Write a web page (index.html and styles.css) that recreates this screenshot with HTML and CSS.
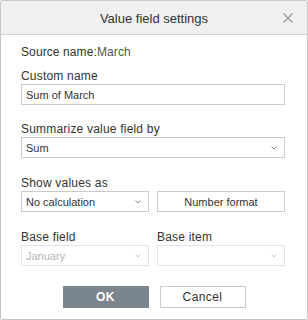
FILE: index.html
```html
<!DOCTYPE html>
<html lang="en">
<head>
  <meta charset="UTF-8">
  <title>Value field settings</title>
  <link rel="stylesheet" href="styles.css">
</head>
<body>
  <div class="dialog">
    <div class="header">
      <span class="title">Value field settings</span>
      <svg class="close" width="10" height="10" viewBox="0 0 10 10">
        <path d="M0.5 0.5 L9.5 9.5 M9.5 0.5 L0.5 9.5" stroke="#9a9a9a" stroke-width="1.2" fill="none"/>
      </svg>
    </div>

    <div class="content">
      <p class="source">Source name:<span class="source-value">March</span></p>

      <div class="field field-first">
        <div class="label">Custom name</div>
        <input class="control text-input" type="text" value="Sum of March">
      </div>

      <div class="field field-second">
        <div class="label">Summarize value field by</div>
        <div class="control dropdown">
          <span>Sum</span>
          <svg class="chevron" width="6" height="4" viewBox="0 0 6 4"><path d="M0.5 0.5 L3 3 L5.5 0.5" stroke="#888" fill="none"/></svg>
        </div>
      </div>

      <div class="field">
        <div class="label">Show values as</div>
        <div class="row">
          <div class="control dropdown">
            <span>No calculation</span>
            <svg class="chevron" width="6" height="4" viewBox="0 0 6 4"><path d="M0.5 0.5 L3 3 L5.5 0.5" stroke="#888" fill="none"/></svg>
          </div>
          <button class="control format-button">Number format</button>
        </div>
      </div>

      <div class="row field">
        <div class="col">
          <div class="label">Base field</div>
          <div class="control dropdown disabled">
            <span>January</span>
            <svg class="chevron" width="6" height="4" viewBox="0 0 6 4"><path d="M0.5 0.5 L3 3 L5.5 0.5" stroke="#c8c8c8" fill="none"/></svg>
          </div>
        </div>
        <div class="col">
          <div class="label">Base item</div>
          <div class="control dropdown disabled">
            <span></span>
            <svg class="chevron" width="6" height="4" viewBox="0 0 6 4"><path d="M0.5 0.5 L3 3 L5.5 0.5" stroke="#c8c8c8" fill="none"/></svg>
          </div>
        </div>
      </div>

      <div class="actions">
        <button class="btn btn-ok">OK</button>
        <button class="btn btn-cancel">Cancel</button>
      </div>
    </div>
  </div>
</body>
</html>
```

FILE: styles.css
```css
* {
  box-sizing: border-box;
}
body {
  margin: 0;
  background: #fff;
  font-family: "Liberation Sans", Arial, sans-serif;
  color: #333;
}
.dialog {
  width: 308px;
  height: 320px;
  border: 1px solid #c6c6c6;
  border-radius: 2px;
  background: #fff;
}
.header {
  height: 34px;
  background: #f0f0f0;
  border-bottom: 1px solid #d4d4d4;
  display: flex;
  align-items: center;
  justify-content: center;
  position: relative;
}
.title {
  font-size: 13px;
  color: #333;
  padding-top: 1px;
}
.close {
  position: absolute;
  right: 14px;
  top: 12px;
}
.content {
  padding: 0 22px 0 20px;
}
.source {
  margin: 10px 0 0;
  font-size: 12px;
  line-height: 14px;
  letter-spacing: 0.1px;
  color: #333;
}
.source-value {
  color: #555;
}
.field {
  margin-top: 17px;
}
.field-first {
  margin-top: 9px;
}
.field-second {
  margin-top: 16px;
}
.label {
  font-size: 12px;
  line-height: 16px;
  height: 16px;
  letter-spacing: 0.2px;
  color: #333;
}
.control {
  height: 21px;
  border: 1px solid #cbcbcb;
  background: #fff;
  font-family: "Liberation Sans", Arial, sans-serif;
  font-size: 11px;
  color: #333;
}
.text-input {
  display: block;
  width: 100%;
  padding: 0 4px;
  margin: 0;
  outline: none;
}
.dropdown {
  display: flex;
  align-items: center;
  justify-content: space-between;
  padding: 0 7px 0 4px;
  min-width: 0;
}
.chevron {
  margin-top: 1px;
}
.dropdown.disabled {
  border-color: #e4e4e4;
  color: #b4b4b4;
}
.row {
  display: grid;
  grid-template-columns: 1fr 1fr;
  gap: 8px;
}
.col {
  min-width: 0;
}
.format-button {
  padding: 0;
  margin: 0;
  min-width: 0;
  cursor: pointer;
  color: #333;
}
.actions {
  display: flex;
  justify-content: center;
  gap: 11px;
  margin-top: 20px;
  padding-left: 2px;
}
.btn {
  width: 86px;
  height: 22px;
  font-family: "Liberation Sans", Arial, sans-serif;
  font-size: 12px;
  letter-spacing: 0.4px;
  cursor: pointer;
  margin: 0;
  padding: 0;
}
.btn-ok {
  background: #7b858e;
  border: 1px solid #7b858e;
  color: #fff;
  font-weight: bold;
}
.btn-cancel {
  background: #fff;
  border: 1px solid #cbcbcb;
  color: #333;
}
```
